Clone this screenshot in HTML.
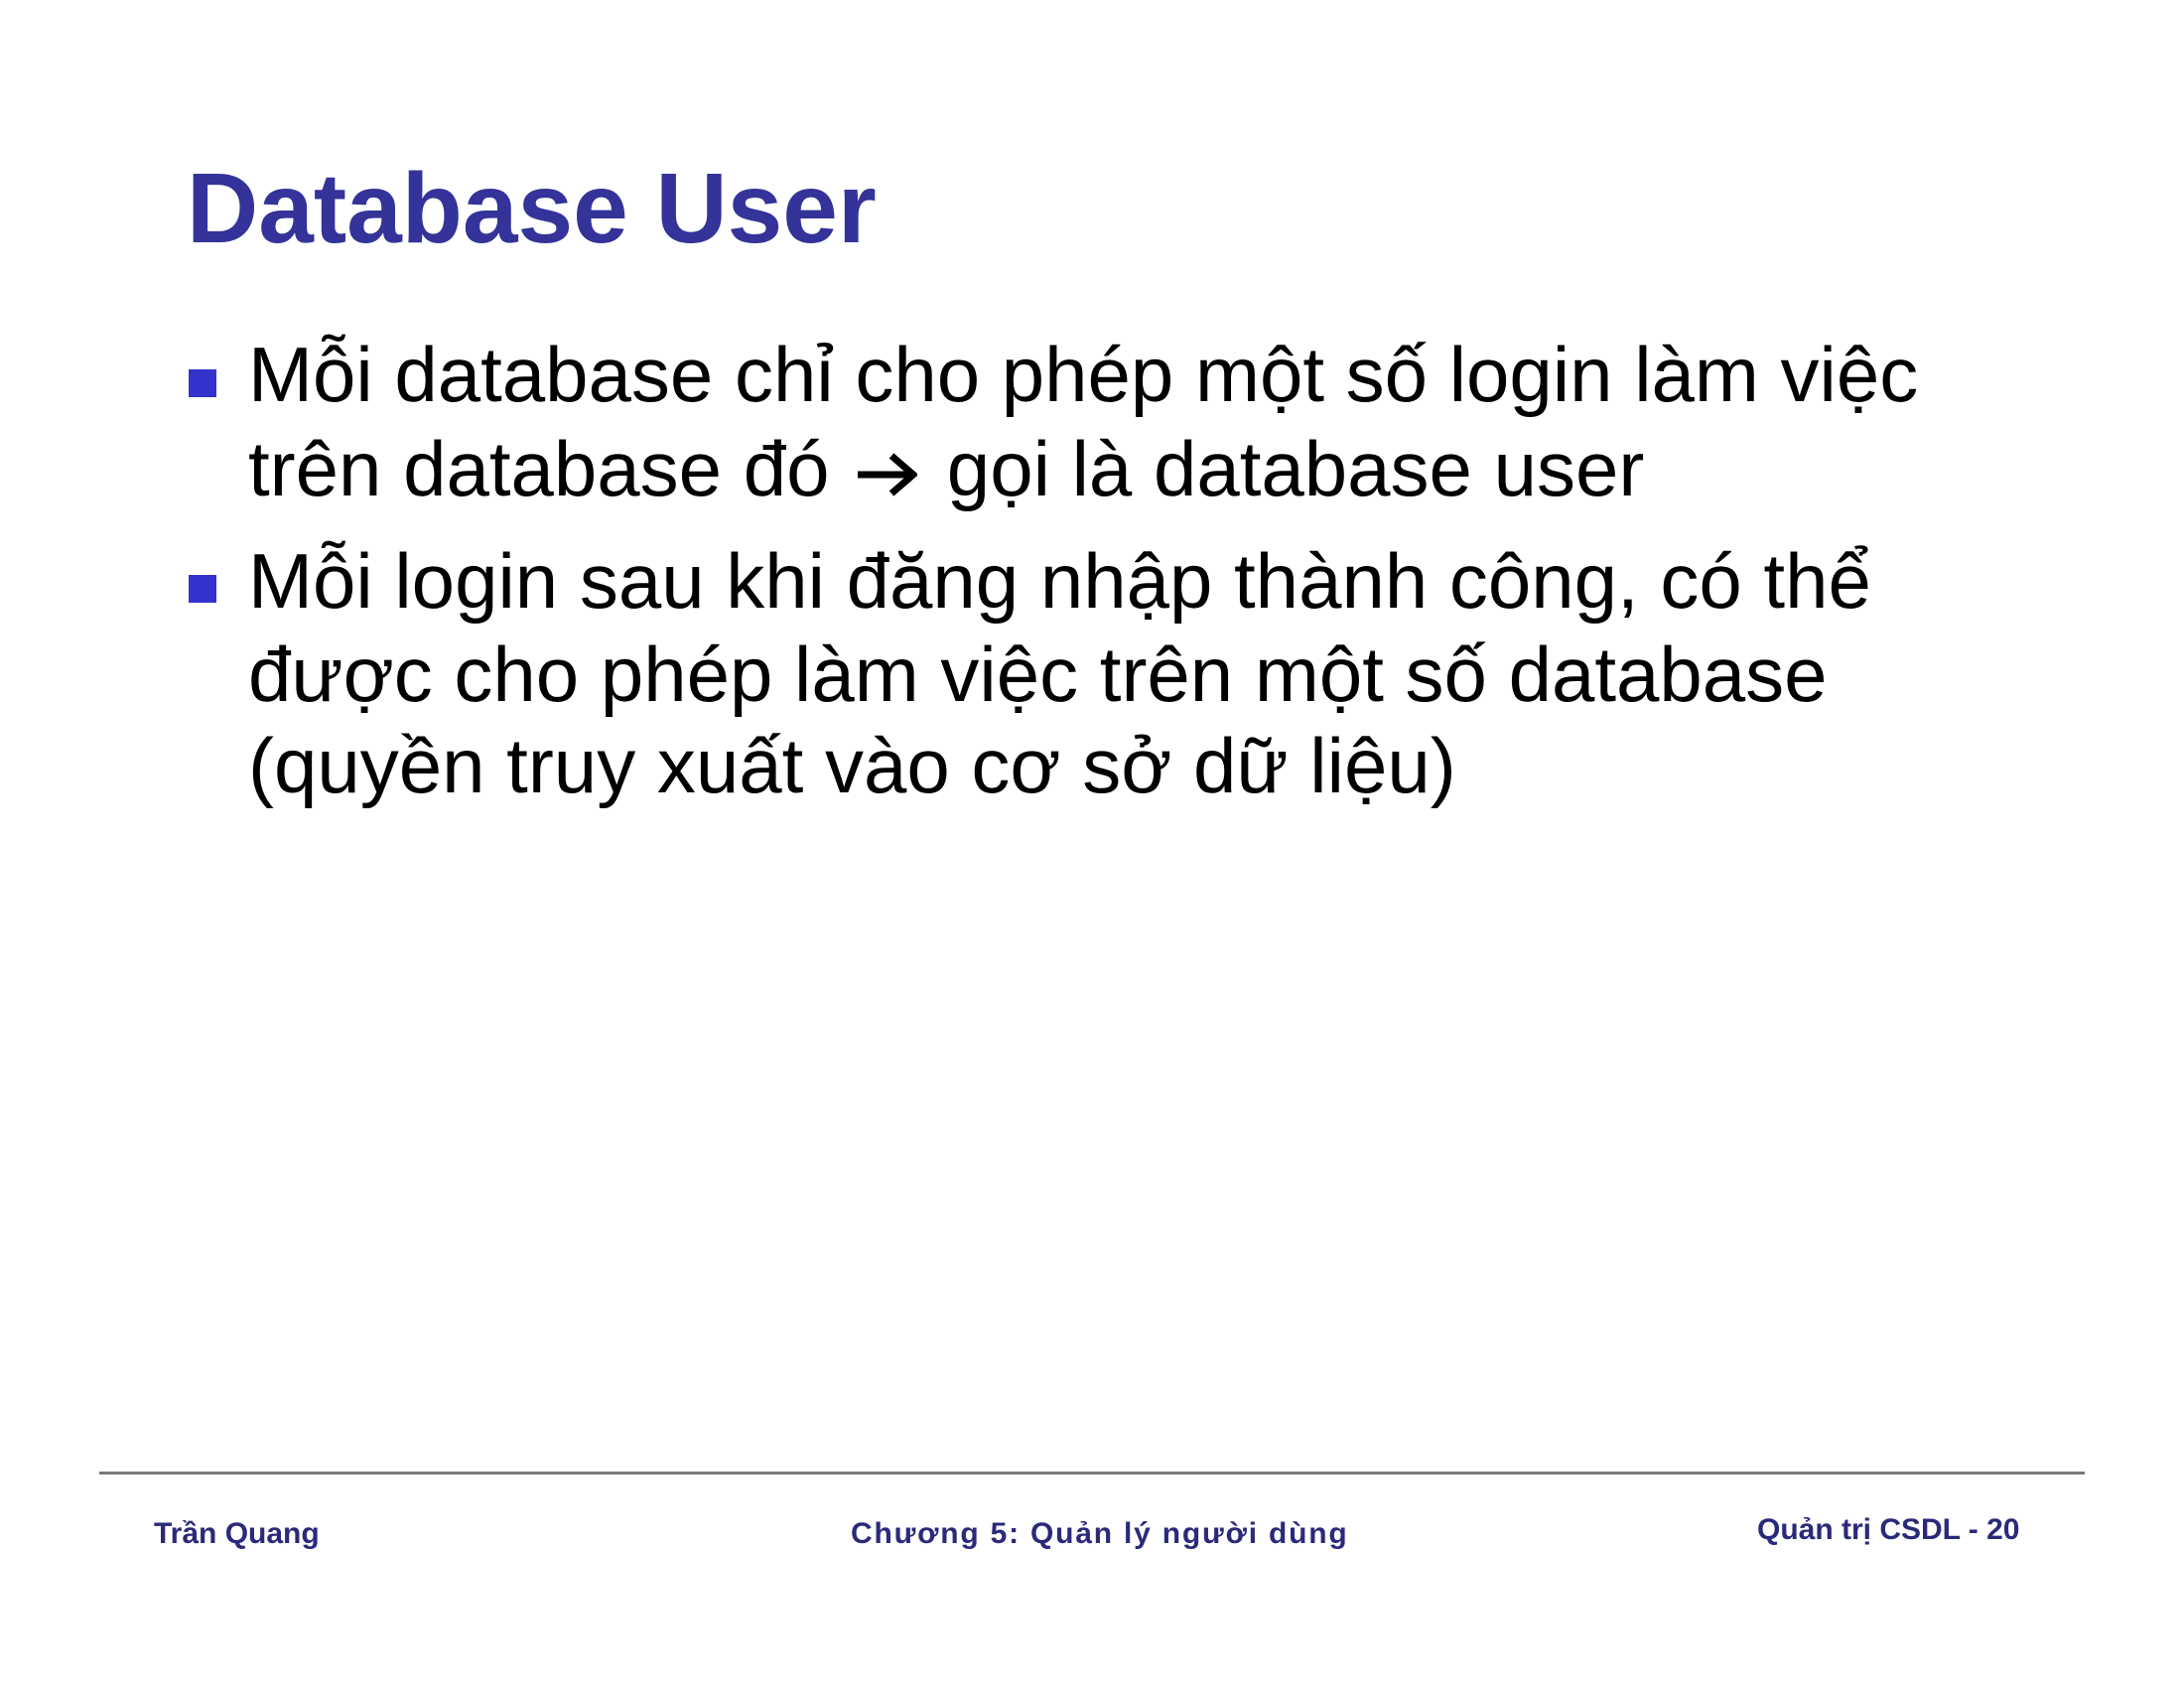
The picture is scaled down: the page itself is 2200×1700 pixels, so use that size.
<!DOCTYPE html>
<html><head><meta charset="utf-8"><style>
body{margin:0;width:2200px;height:1700px;background:#fff;position:relative;overflow:hidden;font-family:"Liberation Sans",sans-serif}
.t{position:absolute;left:188px;top:150px;font-size:100px;font-weight:bold;color:#333399;line-height:120px;white-space:nowrap}
.l{position:absolute;left:250px;font-size:78px;line-height:93px;color:#000;white-space:nowrap}
.b{position:absolute;left:190px;width:28px;height:28px;background:#3333cc}
.f{position:absolute;font-size:30px;font-weight:bold;color:#2a2a7a;line-height:34px;white-space:nowrap}
</style></head><body>
<div class="t">Database User</div>
<div class="b" style="top:372px"></div>
<div class="l" style="top:331px">Mỗi database chỉ cho phép một số login làm việc</div>
<div class="l" style="top:426px">trên database đó <svg width="62" height="46" viewBox="0 0 62 46" style="vertical-align:-2px;margin:0 8px 0 5px"><path d="M2 23H56M36 4L58 23L36 42" fill="none" stroke="#000" stroke-width="7"/></svg> gọi là database user</div>
<div class="b" style="top:579px"></div>
<div class="l" style="top:539px">Mỗi login sau khi đăng nhập thành công, có thể</div>
<div class="l" style="top:633px">được cho phép làm việc trên một số database</div>
<div class="l" style="top:725px">(quyền truy xuất vào cơ sở dữ liệu)</div>
<div style="position:absolute;left:100px;top:1482px;width:2000px;height:3px;background:#7a7a7a"></div>
<div class="f" style="left:155px;top:1528px">Trần Quang</div>
<div class="f" style="left:857px;top:1528px;letter-spacing:1.8px">Chương 5: Quản lý người dùng</div>
<div class="f" style="left:1770px;top:1524px">Quản trị CSDL - 20</div>
</body></html>
